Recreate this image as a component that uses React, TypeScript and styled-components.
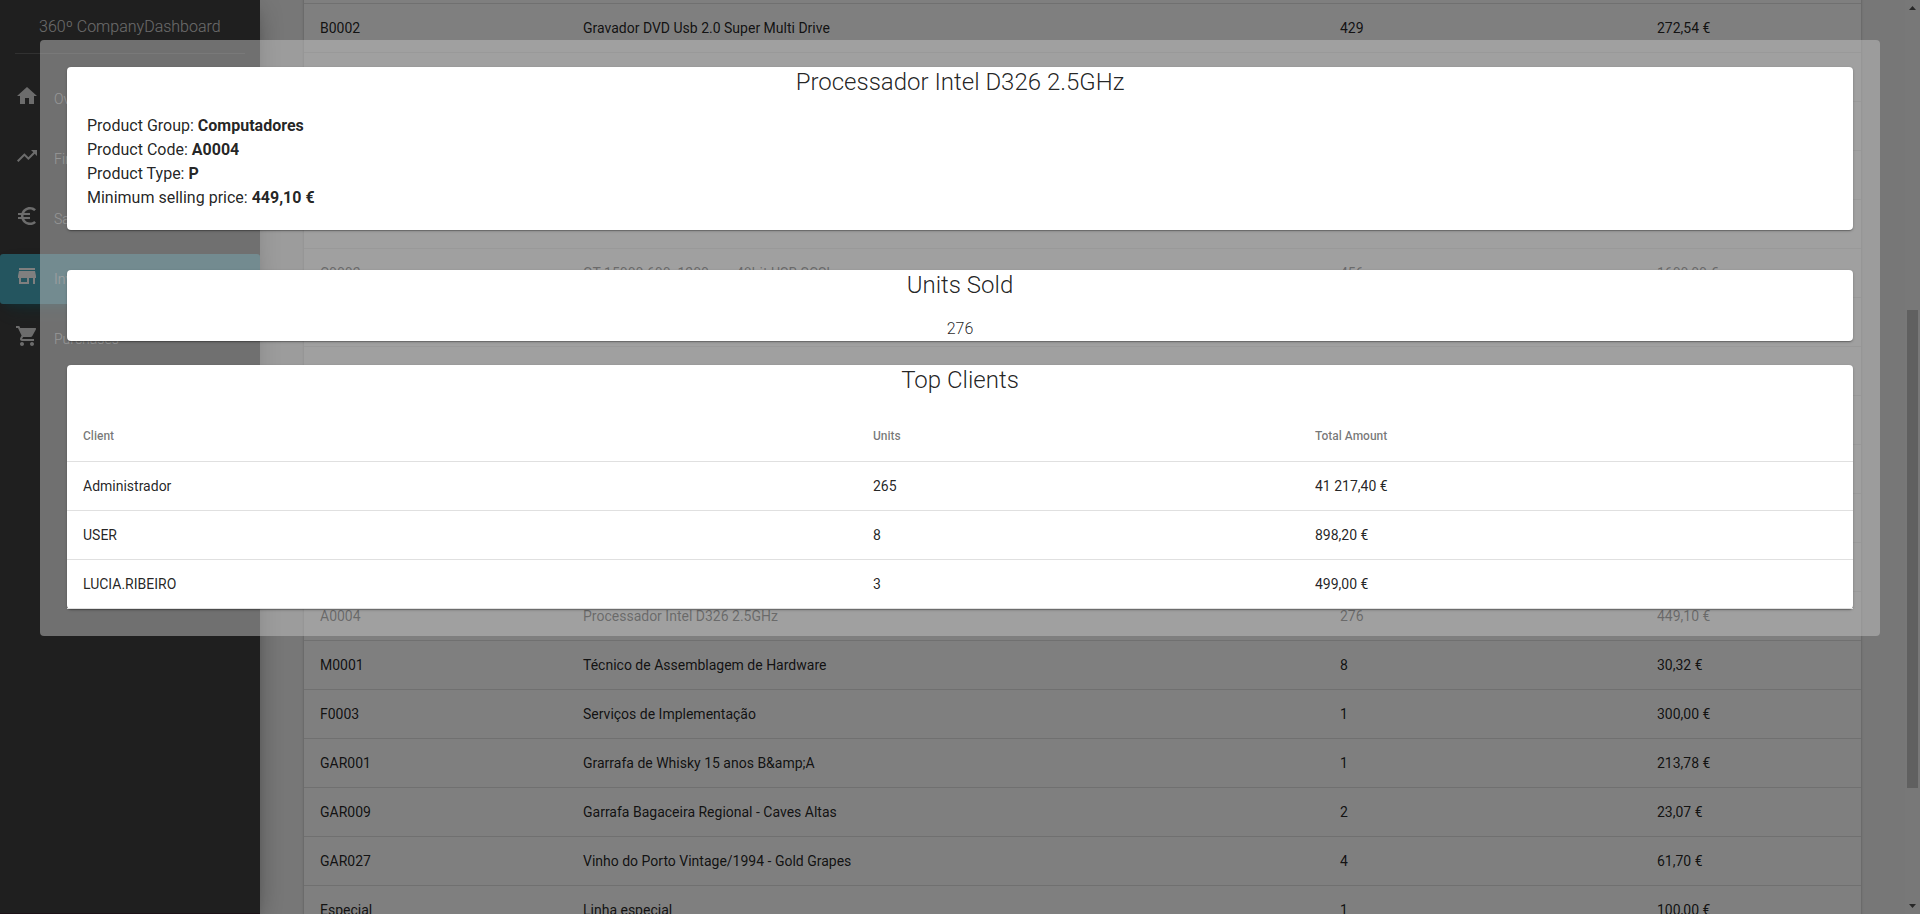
import React from "react";
import styled, { createGlobalStyle } from "styled-components";
import { MdHome, MdTrendingUp, MdEuroSymbol, MdStore, MdShoppingCart } from "react-icons/md";

const GlobalStyle = createGlobalStyle`
  * { box-sizing: border-box; }
  html, body { margin: 0; height: 100%; overflow: hidden; }
  body { font-family: Roboto, "Liberation Sans", sans-serif; background: #eee; color: rgba(0,0,0,.87); }
`;

const Page = styled.div`
  position: relative;
  display: flex;
  width: 100%;
  height: 914px;
  overflow: hidden;
  background: #eee;
`;

const Sidebar = styled.aside`
  flex: 0 0 260px;
  height: 914px;
  background: #3f3f3f;
  border-bottom: 1px solid #38242e;
  color: #fff;
  box-shadow: 0 10px 30px -12px rgba(0,0,0,.42), 0 4px 25px 0 rgba(0,0,0,.12), 0 8px 10px -5px rgba(0,0,0,.2);
`;

const Brand = styled.div`
  margin: 0 15px;
  height: 54px;
  padding: 12px 0 0 24px;
  border-bottom: 1px solid rgba(180,180,180,.3);
  font-size: 16px;
  line-height: 30px;
  font-weight: 300;
  color: rgba(255,255,255,.8);
`;

const Menu = styled.nav`
  display: flex;
  flex-direction: column;
  gap: 10px;
  padding-top: 20px;
`;

const MenuItem = styled.a<{ $active?: boolean }>`
  display: flex;
  align-items: center;
  height: 50px;
  padding-left: 15px;
  gap: 15px;
  border-radius: 3px;
  font-size: 14px;
  font-weight: 300;
  color: ${(p) => (p.$active ? "#fff" : "rgba(255,255,255,.8)")};
  background: ${(p) => (p.$active ? "#48abbe" : "transparent")};
  box-shadow: ${(p) => (p.$active ? "0 12px 20px -10px rgba(0,172,193,.28), 0 4px 20px 0 rgba(0,0,0,.12), 0 7px 8px -5px rgba(0,172,193,.2)" : "none")};
  svg { flex: none; width: 24px; height: 24px; margin-top: -6px; }
`;

const Main = styled.main`
  flex: 1;
  padding-left: 44px;
`;

const ProductTable = styled.div`
  width: 1557px;
  margin-top: -45px;
  background: #fff;
  box-shadow: 0 1px 3px rgba(0,0,0,.2), 0 1px 1px rgba(0,0,0,.14), 0 2px 1px -1px rgba(0,0,0,.12);
`;

const ProductRow = styled.div`
  display: grid;
  grid-template-columns: 263px 757px 317px 1fr;
  height: 49px;
  padding-left: 16px;
  align-items: center;
  border-bottom: 1px solid #e0e0e0;
  font-size: 14px;
`;

const ScrollTrack = styled.div`
  flex: 0 0 15px;
  display: flex;
  flex-direction: column;
  align-items: center;
  padding-top: 6px;
  background: #f1f1f1;
`;

const ScrollArrow = styled.svg`
  flex: none;
  width: 7px;
  height: 4px;
  fill: #505050;
`;

const ScrollThumb = styled.div`
  flex: none;
  width: 11px;
  height: 478px;
  margin: 300px 0 116px;
  background: #c1c1c1;
`;

const Backdrop = styled.div`
  position: absolute;
  inset: 0;
  background: rgba(0,0,0,.5);
`;

const Modal = styled.section`
  position: absolute;
  inset: 40px 40px auto;
  height: 596px;
  padding: 27px;
  border-radius: 4px;
  background: rgba(193,193,193,.5);
`;

const Card = styled.article<{ $height: number; $gap: number }>`
  height: ${(p) => p.$height}px;
  margin-bottom: ${(p) => p.$gap}px;
  border-radius: 4px;
  background: #fff;
  box-shadow: 0 1px 3px rgba(0,0,0,.2), 0 1px 1px rgba(0,0,0,.14), 0 2px 1px -1px rgba(0,0,0,.12);
`;

const CardTitle = styled.h2`
  margin: 0;
  height: 40px;
  font-size: 24px;
  line-height: 30px;
  font-weight: 300;
  text-align: center;
`;

const Details = styled.div`
  padding: 7px 20px;
  font-size: 16px;
  line-height: 24px;
`;

const UnitsValue = styled.div`
  padding-top: 7px;
  text-align: center;
  font-size: 16px;
  line-height: 24px;
  font-weight: 300;
`;

const ClientRow = styled.div<{ $head?: boolean }>`
  display: grid;
  grid-template-columns: 790px 442px 1fr;
  align-items: center;
  height: ${(p) => (p.$head ? 57 : 49)}px;
  padding: ${(p) => (p.$head ? "6px 0 0 16px" : "0 0 0 16px")};
  border-bottom: 1px solid #e0e0e0;
  font-size: ${(p) => (p.$head ? 12 : 14)}px;
  font-weight: ${(p) => (p.$head ? 500 : 400)};
  color: ${(p) => (p.$head ? "rgba(0,0,0,.54)" : "rgba(0,0,0,.87)")};
`;

const menu = [
  { label: "Overview", Icon: MdHome },
  { label: "Financial", Icon: MdTrendingUp },
  { label: "Sales", Icon: MdEuroSymbol },
  { label: "Inventory", Icon: MdStore, active: true },
  { label: "Purchases", Icon: MdShoppingCart },
];

const products: string[][] = [
  [],
  ["B0002", "Gravador DVD Usb 2.0 Super Multi Drive", "429", "272,54 €"],
  [],
  [],
  [],
  [],
  ["C0002", "GT 15000 600x1200ppp 48bit USB SCSI", "456", "1600,00 €"],
  [],
  [],
  [],
  [],
  [],
  [],
  ["A0004", "Processador Intel D326 2.5GHz", "276", "449,10 €"],
  ["M0001", "Técnico de Assemblagem de Hardware", "8", "30,32 €"],
  ["F0003", "Serviços de Implementação", "1", "300,00 €"],
  ["GAR001", "Grarrafa de Whisky 15 anos B&amp;A", "1", "213,78 €"],
  ["GAR009", "Garrafa Bagaceira Regional - Caves Altas", "2", "23,07 €"],
  ["GAR027", "Vinho do Porto Vintage/1994 - Gold Grapes", "4", "61,70 €"],
  ["Especial", "Linha especial", "1", "100,00 €"],
];

const clients = [
  ["Administrador", "265", "41 217,40 €"],
  ["USER", "8", "898,20 €"],
  ["LUCIA.RIBEIRO", "3", "499,00 €"],
];

export default function App() {
  return (
    <Page>
      <GlobalStyle />
      <Sidebar>
        <Brand>360º CompanyDashboard</Brand>
        <Menu>
          {menu.map(({ label, Icon, active }) => (
            <MenuItem key={label} $active={active}>
              <Icon />
              {label}
            </MenuItem>
          ))}
        </Menu>
      </Sidebar>
      <Main>
        <ProductTable>
          {products.map((row, i) => (
            <ProductRow key={i}>
              {row.map((cell, j) => (
                <span key={j}>{cell}</span>
              ))}
            </ProductRow>
          ))}
        </ProductTable>
      </Main>
      <ScrollTrack>
        <ScrollArrow viewBox="0 0 7 4"><path d="M3.5 0L7 4H0z" /></ScrollArrow>
        <ScrollThumb />
        <ScrollArrow viewBox="0 0 7 4"><path d="M0 0h7L3.5 4z" /></ScrollArrow>
      </ScrollTrack>
      <Backdrop />
      <Modal>
        <Card $height={163} $gap={40}>
          <CardTitle>Processador Intel D326 2.5GHz</CardTitle>
          <Details>
            <div>Product Group: <b>Computadores</b></div>
            <div>Product Code: <b>A0004</b></div>
            <div>Product Type: <b>P</b></div>
            <div>Minimum selling price: <b>449,10 €</b></div>
          </Details>
        </Card>
        <Card $height={71} $gap={24}>
          <CardTitle>Units Sold</CardTitle>
          <UnitsValue>276</UnitsValue>
        </Card>
        <Card $height={244} $gap={0}>
          <CardTitle>Top Clients</CardTitle>
          <ClientRow $head>
            <span>Client</span>
            <span>Units</span>
            <span>Total Amount</span>
          </ClientRow>
          {clients.map((row) => (
            <ClientRow key={row[0]}>
              {row.map((cell) => (
                <span key={cell}>{cell}</span>
              ))}
            </ClientRow>
          ))}
        </Card>
      </Modal>
    </Page>
  );
}
